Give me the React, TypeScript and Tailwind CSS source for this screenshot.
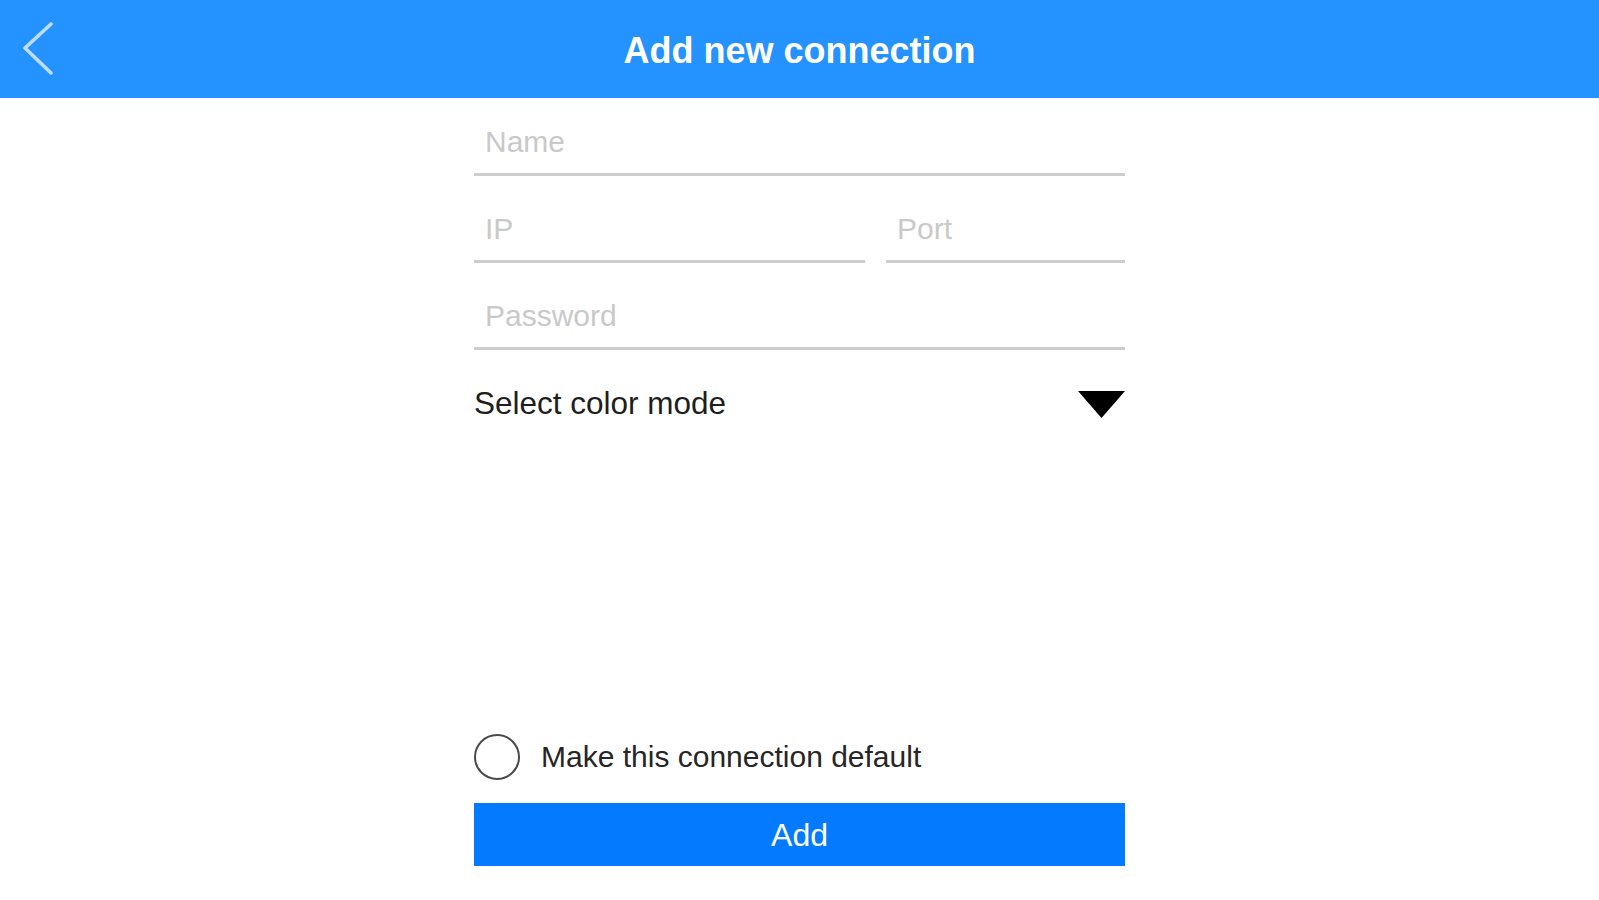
import React from 'react'

// ─── Header ───────────────────────────────────────────────────────────────────

function BackChevron() {
  return (
    <svg width="32" height="54" viewBox="0 0 32 54" fill="none" aria-hidden>
      <polyline
        points="29,2 3,26 29,51"
        stroke="#bddcff"
        strokeWidth="3.6"
        strokeLinecap="round"
        strokeLinejoin="round"
      />
    </svg>
  )
}

function Header() {
  return (
    <div className="h-[98px] bg-[#2492ff] grid grid-cols-[1fr_auto_1fr] items-center">
      <div className="pl-[22px] flex items-center">
        <BackChevron />
      </div>
      <h1 className="text-white text-[36px] leading-none font-bold pt-[4px]">Add new connection</h1>
      <div />
    </div>
  )
}

// ─── Form pieces ──────────────────────────────────────────────────────────────

function Field({ placeholder, className = '' }: { placeholder: string; className?: string }) {
  return (
    <div className={`h-[59px] border-b-[3px] border-[#cdcdcd] pl-[11px] pt-[10px] ${className}`}>
      <span className="text-[30px] leading-[30px] text-[#c9c9c9]">{placeholder}</span>
    </div>
  )
}

function ColorModeSelect() {
  return (
    <div className="mt-[34px] h-[40px] flex items-center justify-between">
      <span className="text-[31.5px] leading-none text-[#1e1e1e]">Select color mode</span>
      <svg width="47" height="27" viewBox="0 0 47 27" aria-hidden>
        <polygon points="0,0 47,0 23.5,27" fill="#000" />
      </svg>
    </div>
  )
}

// ─── Main component ───────────────────────────────────────────────────────────

export default function App() {
  return (
    <div
      className="h-screen w-full bg-white flex flex-col"
      style={{ fontFamily: '"Liberation Sans", Arial, sans-serif' }}
    >
      <Header />

      <div className="flex-1 w-[651px] mx-auto flex flex-col pt-[19px] pb-[34px]">
        <Field placeholder="Name" />

        <div className="mt-[28px] flex gap-[21px]">
          <Field placeholder="IP" className="w-[391px]" />
          <Field placeholder="Port" className="flex-1" />
        </div>

        <Field placeholder="Password" className="mt-[28px]" />

        <ColorModeSelect />

        {/* Default toggle + submit */}
        <div className="mt-auto flex items-center gap-[21px] h-[46px]">
          <span className="w-[46px] h-[46px] rounded-full border-[2.5px] border-[#4a4a4a] flex-shrink-0" />
          <span className="text-[30px] leading-none text-[#262626]">Make this connection default</span>
        </div>

        <button className="mt-[23px] h-[63px] w-full bg-[#047bff] text-white text-[32px] leading-none">
          Add
        </button>
      </div>
    </div>
  )
}
